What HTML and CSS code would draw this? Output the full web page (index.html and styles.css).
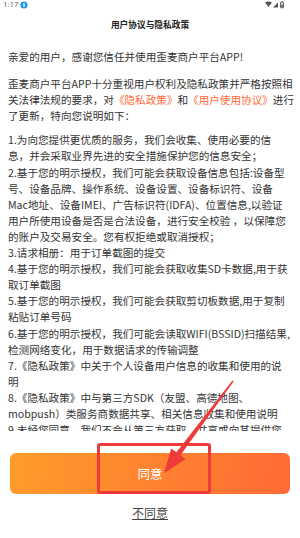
FILE: index.html
```html
<!DOCTYPE html>
<html lang="zh">
<head>
<meta charset="utf-8">
<link rel="stylesheet" href="styles.css">
</head>
<body>
<div class="page">
  <div class="status">
    <div class="status-left">
      <span class="time">1:17</span>
      <svg class="dot" width="8" height="8" viewBox="0 0 8 8"><circle cx="4" cy="4" r="3.6" fill="#1e96f0"/><rect x="3.3" y="2" width="1.4" height="4" rx="0.6" fill="#fff"/></svg>
    </div>
    <svg class="sys" width="22" height="8" viewBox="0 0 22 8">
      <path d="M0 1.6 Q3.5 -0.4 7 1.6 L3.5 6 Z" fill="#555"/>
      <path d="M8 6.5 L13 6.5 L13 1.5 Z" fill="#555"/>
      <rect x="15.5" y="1.2" width="3" height="5.6" rx="0.5" fill="none" stroke="#555" stroke-width="0.9"/>
      <rect x="16.2" y="3.5" width="1.6" height="3" fill="#555"/>
      <rect x="16.3" y="0.4" width="1.4" height="1" fill="#555"/>
    </svg>
  </div>
  <h1 class="title">用户协议与隐私政策</h1>
  <div class="content">
    <p class="para p-first">亲爱的用户，感谢您信任并使用歪麦商户平台APP!</p>
    <p class="para p-second">歪麦商户平台APP十分重视用户权利及隐私政策并严格按照相<br>关法律法规的要求，对<span class="link">《隐私政策》</span>和<span class="link">《用户使用协议》</span>进行<br>了更新，特向您说明如下：</p>
    <div class="items">
      <p class="para">1.为向您提供更优质的服务，我们会收集、使用必要的信<br>息，并会采取业界先进的安全措施保护您的信息安全；</p>
      <p class="para">2.基于您的明示授权，我们可能会获取设备信息包括:设备型<br>号、设备品牌、操作系统、设备设置、设备标识符、设备<br>Mac地址、设备IMEI、广告标识符(IDFA)、位置信息,以验证<br>用户所使用设备是否是合法设备，进行安全校验 ，以保障您<br>的账户及交易安全。您有权拒绝或取消授权；</p>
      <p class="para">3.请求相册：用于订单截图的提交</p>
      <p class="para">4.基于您的明示授权，我们可能会获取收集SD卡数据,用于获<br>取订单截图</p>
      <p class="para">5.基于您的明示授权，我们可能会获取剪切板数据,用于复制<br>粘贴订单号码</p>
      <p class="para">6.基于您的明示授权，我们可能会读取WIFI(BSSID)扫描结果,<br>检测网络变化，用于数据请求的传输调整</p>
      <p class="para">7.《隐私政策》中关于个人设备用户信息的收集和使用的说<br>明</p>
      <p class="para">8.《隐私政策》中与第三方SDK（友盟、高德地图、<br>mobpush）类服务商数据共享、相关信息收集和使用说明</p>
      <p class="para">9.未经您同意，我们不会从第三方获取、共享或向其提供您<br>的信息；</p>
    </div>
  </div>
  <div class="footer">
    <button class="agree">同意</button>
    <a class="disagree">不同意</a>
  </div>
  <div class="mark-box"></div>
  <svg class="mark-arrow" width="300" height="538" viewBox="0 0 300 538">
    <polygon points="233.6,381.5 180.4,455.3 185.6,459.2 164,473 171.2,448.4 176.4,452.3 232.4,380.5" fill="#f03a3a"/>
  </svg>
</div>
</body>
</html>
```

FILE: styles.css
```css
* { box-sizing: border-box; }
html, body { margin: 0; padding: 0; background: #fff; }
body { font-family: "Noto Sans CJK SC", "Noto Sans", sans-serif; color: #333; }
.page {
  position: relative;
  width: 300px;
  height: 538px;
  display: flex;
  flex-direction: column;
  overflow: hidden;
}
.status {
  height: 16px;
  display: flex;
  justify-content: space-between;
  align-items: flex-start;
  padding: 0 13px 0 3px;
}
.status-left { display: flex; align-items: center; gap: 2px; height: 10px; }
.time { font-size: 8px; line-height: 10px; color: #666; font-family: Roboto, "Noto Sans", sans-serif; }
.dot { display: block; }
.sys { display: block; margin-top: 1px; }
.title {
  margin: 0;
  height: 18px;
  font-size: 8.7px;
  line-height: 18px;
  font-weight: 700;
  text-align: center;
  color: #222;
}
.content {
  flex: 1;
  overflow: hidden;
  padding: 15px 0 0 8px;
  font-size: 10.6px;
  line-height: 16.1px;
  white-space: nowrap;
}
.para { margin: 0; }
.p-first { margin-bottom: 11px; }
.p-second { margin-bottom: 8px; }
.link { color: #ff6a3a; }
.footer {
  display: flex;
  flex-direction: column;
  align-items: center;
  padding: 22px 10px 17px 10px;
}
.agree {
  width: 100%;
  height: 41px;
  border: 0;
  border-radius: 6px;
  background: linear-gradient(100deg, #ff9c2a 0%, #ff8330 50%, #ff6a35 100%);
  color: #fff;
  font-family: inherit;
  font-size: 12.5px;
  padding: 0;
}
.disagree {
  margin-top: 11px;
  font-size: 12px;
  line-height: 16px;
  color: #444;
  text-decoration: underline;
}
.mark-box {
  position: absolute;
  left: 97px;
  top: 443px;
  width: 114px;
  height: 51px;
  border: 3px solid #f03a3a;
  border-radius: 3px;
}
.mark-arrow { position: absolute; left: 0; top: 0; pointer-events: none; }
```
